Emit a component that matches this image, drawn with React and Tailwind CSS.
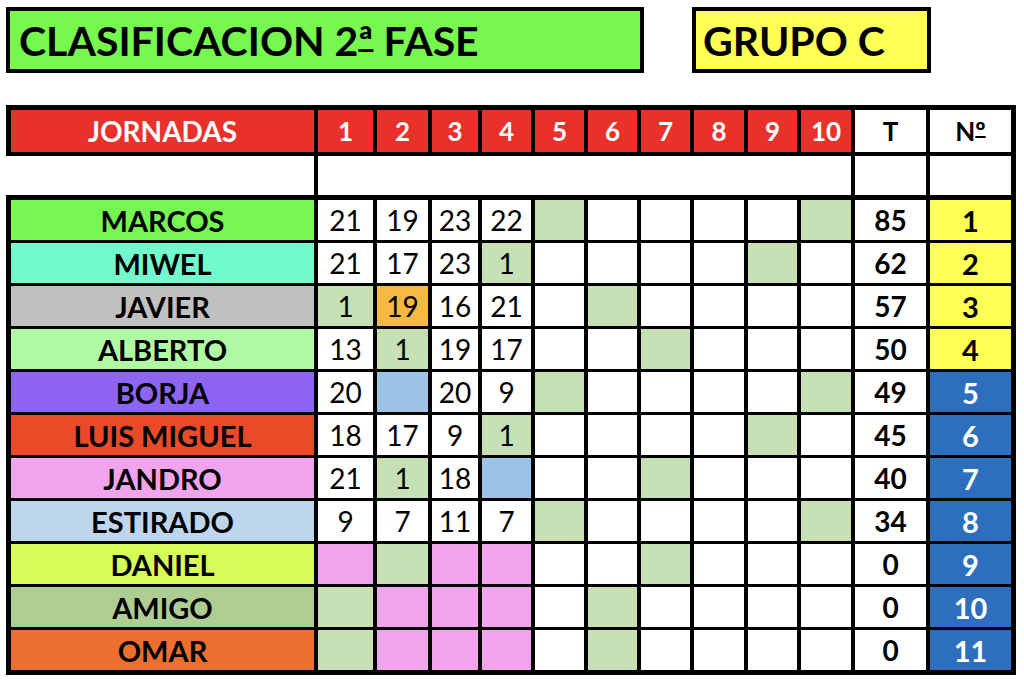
import React from "react";

const G = "bg-[#c6e0b4]";
const P = "bg-[#f0a5ea]";
const B = "bg-[#9dc3e6]";
const O = "bg-[#f4b942]";
const W = "bg-white";

const rows = [
  { name: "MARCOS", color: "bg-[#76f650]", cells: [["21", W], ["19", W], ["23", W], ["22", W], ["", G], ["", W], ["", W], ["", W], ["", W], ["", G]], t: 85 },
  { name: "MIWEL", color: "bg-[#72f9cc]", cells: [["21", W], ["17", W], ["23", W], ["1", G], ["", W], ["", W], ["", W], ["", W], ["", G], ["", W]], t: 62 },
  { name: "JAVIER", color: "bg-[#c0c0c0]", cells: [["1", G], ["19", O], ["16", W], ["21", W], ["", W], ["", G], ["", W], ["", W], ["", W], ["", W]], t: 57 },
  { name: "ALBERTO", color: "bg-[#affaa3]", cells: [["13", W], ["1", G], ["19", W], ["17", W], ["", W], ["", W], ["", G], ["", W], ["", W], ["", W]], t: 50 },
  { name: "BORJA", color: "bg-[#8e64f2]", cells: [["20", W], ["", B], ["20", W], ["9", W], ["", G], ["", W], ["", W], ["", W], ["", W], ["", G]], t: 49 },
  { name: "LUIS MIGUEL", color: "bg-[#ea4a28]", cells: [["18", W], ["17", W], ["9", W], ["1", G], ["", W], ["", W], ["", W], ["", W], ["", G], ["", W]], t: 45 },
  { name: "JANDRO", color: "bg-[#efa4ec]", cells: [["21", W], ["1", G], ["18", W], ["", B], ["", W], ["", W], ["", G], ["", W], ["", W], ["", W]], t: 40 },
  { name: "ESTIRADO", color: "bg-[#bdd6ed]", cells: [["9", W], ["7", W], ["11", W], ["7", W], ["", G], ["", W], ["", W], ["", W], ["", W], ["", G]], t: 34 },
  { name: "DANIEL", color: "bg-[#d6fc58]", cells: [["", P], ["", G], ["", P], ["", P], ["", W], ["", W], ["", G], ["", W], ["", W], ["", W]], t: 0 },
  { name: "AMIGO", color: "bg-[#aecd92]", cells: [["", G], ["", P], ["", P], ["", P], ["", W], ["", G], ["", W], ["", W], ["", W], ["", W]], t: 0 },
  { name: "OMAR", color: "bg-[#ec6f30]", cells: [["", G], ["", P], ["", P], ["", P], ["", W], ["", G], ["", W], ["", W], ["", W], ["", W]], t: 0 },
];

const cols = "grid grid-cols-[303px_55px_51px_46px_49px_49px_49px_49px_50px_49px_50px_71px_81px] gap-x-[4px]";

export default function App() {
  return (
    <div className="w-[1024px] h-[683px] bg-white overflow-hidden font-[Lato,sans-serif] text-black leading-none">
      <div className="flex pt-[7px] pl-[6px]">
        <div className="w-[638px] h-[66px] border-[4px] border-black bg-[#76f84e] flex items-center pl-[9px] text-[41px] font-bold">
          <span>
            CLASIFICACION 2<span className="underline decoration-[3px] underline-offset-[-7px]">ª</span> FASE
          </span>
        </div>
        <div className="ml-[48px] w-[239px] h-[66px] border-[4px] border-black bg-[#ffff55] flex items-center pl-[7px] text-[41px] font-bold">
          GRUPO C
        </div>
      </div>

      <div className="mt-[32px] ml-[6px] w-[1010px] bg-black p-[5px] flex flex-col">
        <div className={`${cols} h-[42px]`}>
          <div className="bg-[#e8312a] text-white font-bold text-[28px] flex items-center justify-center">JORNADAS</div>
          {[1, 2, 3, 4, 5, 6, 7, 8, 9, 10].map((n) => (
            <div key={n} className="bg-[#e8312a] text-white font-bold text-[26px] flex items-center justify-center">{n}</div>
          ))}
          <div className="bg-white font-bold text-[26px] flex items-center justify-center">T</div>
          <div className="bg-white font-bold text-[26px] flex items-center justify-center">
            <span>N<span className="underline decoration-[2px] underline-offset-[-5px]">º</span></span>
          </div>
        </div>

        <div className={`${cols} h-[39px] mt-[4px]`}>
          <div className="bg-white ml-[-5px]" />
          <div className="bg-white col-span-10" />
          <div className="bg-white" />
          <div className="bg-white" />
        </div>

        <div className={`${cols} auto-rows-[40px] gap-y-[3px] mt-[5px]`}>
          {rows.map((r, i) => (
            <React.Fragment key={r.name}>
              <div className={`${r.color} flex items-center justify-center font-bold text-[29px]`}>{r.name}</div>
              {r.cells.map(([v, c], j) => (
                <div key={j} className={`${c} flex items-center justify-center text-[28px]`}>{v}</div>
              ))}
              <div className="bg-white flex items-center justify-center font-bold text-[28px]">{r.t}</div>
              <div className={`${i < 4 ? "bg-[#ffff55] text-black" : "bg-[#2e6fbd] text-white"} flex items-center justify-center font-bold text-[29px]`}>{i + 1}</div>
            </React.Fragment>
          ))}
        </div>
      </div>
    </div>
  );
}
